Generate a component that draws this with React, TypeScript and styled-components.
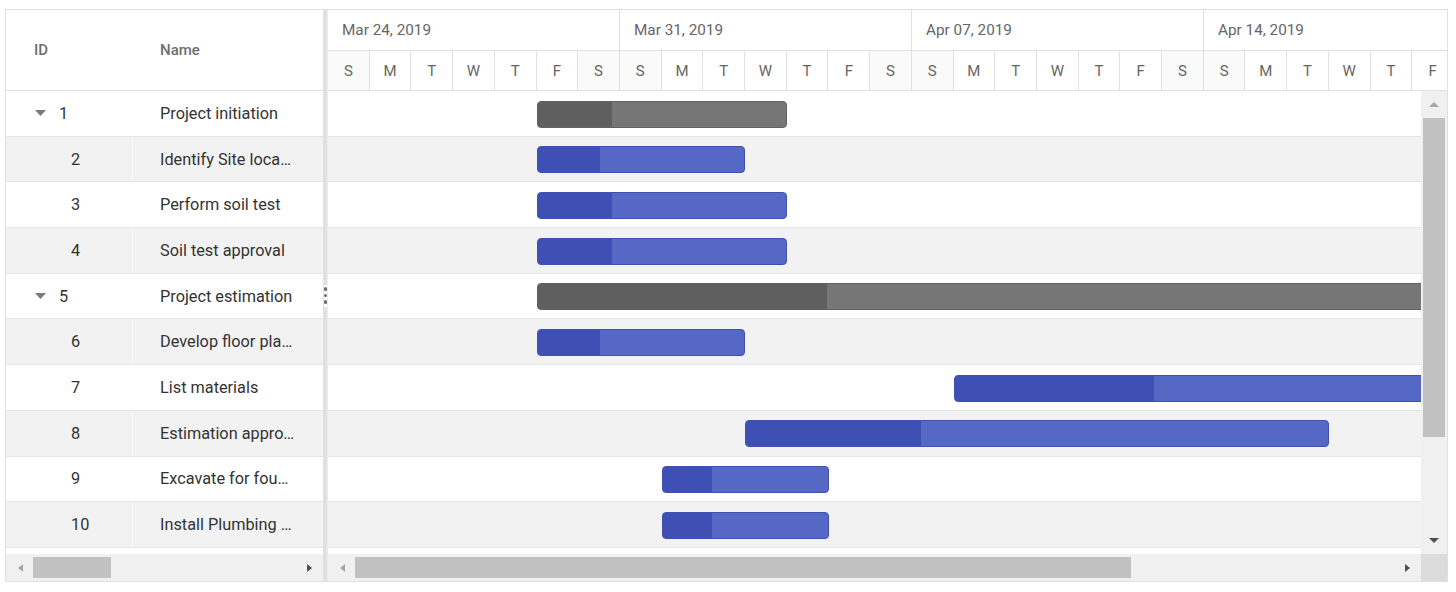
import React from 'react'
import styled, { createGlobalStyle } from 'styled-components'

const DAY = 292 / 7
const ROW_H = 45.7

const GlobalStyle = createGlobalStyle`
  body {
    margin: 0;
    background: #fff;
    font-family: Roboto, 'Noto Sans', Arial, sans-serif;
  }
`

interface Task {
  id: number
  name: string
  parent?: boolean
  start: number
  days: number
  progress: number
}

const tasks: Task[] = [
  { id: 1, name: 'Project initiation', parent: true, start: 5, days: 6, progress: 30 },
  { id: 2, name: 'Identify Site location', start: 5, days: 5, progress: 30 },
  { id: 3, name: 'Perform soil test', start: 5, days: 6, progress: 30 },
  { id: 4, name: 'Soil test approval', start: 5, days: 6, progress: 30 },
  { id: 5, name: 'Project estimation', parent: true, start: 5, days: 24, progress: 29 },
  { id: 6, name: 'Develop floor plan for estimation', start: 5, days: 5, progress: 30 },
  { id: 7, name: 'List materials', start: 15, days: 16, progress: 30 },
  { id: 8, name: 'Estimation approval', start: 10, days: 14, progress: 30 },
  { id: 9, name: 'Excavate for foundations', start: 8, days: 4, progress: 30 },
  { id: 10, name: 'Install Plumbing grounds', start: 8, days: 4, progress: 30 },
]

const weeks = ['Mar 24, 2019', 'Mar 31, 2019', 'Apr 07, 2019', 'Apr 14, 2019', 'Apr 21, 2019']
const dayLetters = ['S', 'M', 'T', 'W', 'T', 'F', 'S']

const Gantt = styled.div`
  display: flex;
  width: 1441px;
  margin: 9px 0 0 5px;
  border: 1px solid #e0e0e0;
  background: #fff;
  overflow: hidden;
`

/* ---------- left tree grid ---------- */

const GridPane = styled.div`
  width: 317px;
  flex-shrink: 0;
  display: flex;
  flex-direction: column;
`

const GridHeader = styled.div`
  display: flex;
  height: 81px;
  box-sizing: border-box;
  border-bottom: 1px solid #e0e0e0;
`

const HeaderCell = styled.div<{ $w: number; $pad: number }>`
  width: ${(p) => p.$w}px;
  padding-left: ${(p) => p.$pad}px;
  box-sizing: border-box;
  display: flex;
  align-items: center;
  font-size: 15px;
  font-weight: 500;
  color: #6e6e6e;
`

const Body = styled.div`
  height: 463px;
  overflow: hidden;
`

const Row = styled.div<{ $alt: boolean }>`
  display: flex;
  height: ${ROW_H}px;
  box-sizing: border-box;
  border-bottom: 1px solid #e6e6e6;
  background: ${(p) => (p.$alt ? '#f2f2f2' : '#fff')};
`

const IdCell = styled.div<{ $parent: boolean }>`
  width: 127px;
  flex-shrink: 0;
  box-sizing: border-box;
  display: flex;
  align-items: center;
  padding-left: ${(p) => (p.$parent ? 29 : 65)}px;
  border-right: 1px solid rgba(255, 255, 255, 0.55);
  font-size: 16.3px;
  color: #333;
`

const ExpandIcon = styled.svg`
  width: 11px;
  height: 6px;
  margin-right: 13px;
  fill: #7a7a7a;
`

const NameCell = styled.div`
  flex: 1;
  min-width: 0;
  padding: 0 28px 0 27px;
  display: flex;
  align-items: center;
  font-size: 16.3px;
  color: #333;

  span {
    overflow: hidden;
    white-space: nowrap;
    text-overflow: ellipsis;
  }
`

/* ---------- splitter ---------- */

const Splitter = styled.div`
  width: 5px;
  flex-shrink: 0;
  background: #e0e0e0;
  border-right: 1px solid #ededed;
  box-sizing: border-box;
  display: flex;
  flex-direction: column;
  justify-content: center;
`

const Handle = styled.div`
  height: 22px;
  background: #fff;
  display: flex;
  flex-direction: column;
  align-items: center;
  justify-content: center;
  gap: 3px;
  margin-left: 1px;
`

const Dot = styled.span`
  width: 3.5px;
  height: 3.5px;
  border-radius: 50%;
  background: #6a6a6a;
`

/* ---------- chart side ---------- */

const ChartPane = styled.div`
  flex: 1;
  min-width: 0;
  display: flex;
  flex-direction: column;
  overflow: hidden;
`

const Tier = styled.div<{ $h: number }>`
  display: flex;
  height: ${(p) => p.$h}px;
  box-sizing: border-box;
  border-bottom: 1px solid #e0e0e0;
`

const WeekCell = styled.div`
  width: ${DAY * 7}px;
  flex-shrink: 0;
  box-sizing: border-box;
  border-right: 1px solid #e0e0e0;
  padding-left: 14px;
  display: flex;
  align-items: center;
  font-size: 15.3px;
  color: #666;
`

const DayCell = styled.div<{ $weekend: boolean }>`
  width: ${DAY}px;
  flex-shrink: 0;
  box-sizing: border-box;
  border-right: 1px solid #e0e0e0;
  display: flex;
  align-items: center;
  justify-content: center;
  font-size: 15px;
  color: #666;
  background: ${(p) => (p.$weekend ? '#fafafa' : '#fff')};
`

const ChartMain = styled.div`
  display: flex;
  height: 463px;
`

const ChartBody = styled.div`
  flex: 1;
  overflow: hidden;
`

const ChartRow = styled(Row)`
  position: relative;
  align-items: center;
`

const TaskBar = styled.div<{ $parent: boolean }>`
  position: absolute;
  top: 9.5px;
  height: 27px;
  box-sizing: border-box;
  border-radius: 4px;
  overflow: hidden;
  border: 1px solid ${(p) => (p.$parent ? '#616161' : '#3f51b5')};
  background: ${(p) => (p.$parent ? '#767676' : '#5668c6')};
`

const Progress = styled.div<{ $parent: boolean }>`
  height: 100%;
  background: ${(p) => (p.$parent ? '#5f5f5f' : '#3e50b4')};
`

/* ---------- scrollbars ---------- */

const HScroll = styled.div`
  height: 27px;
  flex: 1;
  display: flex;
  align-items: center;
  background: #f0f0f0;
`

const ArrowBox = styled.div<{ $w: number }>`
  width: ${(p) => p.$w}px;
  height: 100%;
  flex-shrink: 0;
  display: flex;
  align-items: center;
  justify-content: center;
`

const HTrack = styled.div`
  flex: 1;
  height: 21px;
  display: flex;
`

const HThumb = styled.div<{ $w: number }>`
  width: ${(p) => p.$w}px;
  height: 100%;
  background: #c1c1c1;
`

const VScroll = styled.div`
  width: 26px;
  flex-shrink: 0;
  display: flex;
  flex-direction: column;
  background: #f0f0f0;
`

const VTrack = styled.div`
  flex: 1;
  display: flex;
  flex-direction: column;
  padding: 0 2px;
`

const VThumb = styled.div<{ $h: number }>`
  height: ${(p) => p.$h}px;
  background: #c1c1c1;
`

const Footer = styled.div`
  display: flex;
`

const Corner = styled.div`
  width: 26px;
  height: 27px;
  background: #dcdcdc;
`

type Dir = 'left' | 'right' | 'up' | 'down'

const arrowPoints: Record<Dir, string> = {
  left: '7,0 7,8 2,4',
  right: '1,0 1,8 6,4',
  up: '0,6 10,6 5,1',
  down: '0,1 10,1 5,6',
}

const Arrow: React.FC<{ dir: Dir; dark?: boolean }> = ({ dir, dark }) => {
  const vertical = dir === 'up' || dir === 'down'
  return (
    <svg width={vertical ? 10 : 8} height={vertical ? 7 : 8} viewBox={vertical ? '0 0 10 7' : '0 0 8 8'}>
      <polygon points={arrowPoints[dir]} fill={dark ? '#4f4f4f' : '#a6a6a6'} />
    </svg>
  )
}

const ScrollBarH: React.FC<{ thumb: number }> = ({ thumb }) => (
  <HScroll>
    <ArrowBox $w={27}>
      <Arrow dir="left" />
    </ArrowBox>
    <HTrack>
      <HThumb $w={thumb} />
    </HTrack>
    <ArrowBox $w={27}>
      <Arrow dir="right" dark />
    </ArrowBox>
  </HScroll>
)

const App: React.FC = () => {
  return (
    <>
      <GlobalStyle />
      <Gantt>
        <GridPane>
          <GridHeader>
            <HeaderCell $w={127} $pad={28}>ID</HeaderCell>
            <HeaderCell $w={190} $pad={27}>Name</HeaderCell>
          </GridHeader>
          <Body>
            {tasks.map((t, i) => (
              <Row key={t.id} $alt={i % 2 === 1}>
                <IdCell $parent={!!t.parent}>
                  {t.parent && (
                    <ExpandIcon viewBox="0 0 11 6">
                      <polygon points="0,0 11,0 5.5,6" />
                    </ExpandIcon>
                  )}
                  {t.id}
                </IdCell>
                <NameCell>
                  <span>{t.name}</span>
                </NameCell>
              </Row>
            ))}
          </Body>
          <Footer>
            <ScrollBarH thumb={78} />
          </Footer>
        </GridPane>

        <Splitter>
          <Handle>
            <Dot />
            <Dot />
            <Dot />
          </Handle>
        </Splitter>

        <ChartPane>
          <Tier $h={41}>
            {weeks.map((w) => (
              <WeekCell key={w}>{w}</WeekCell>
            ))}
          </Tier>
          <Tier $h={40}>
            {weeks.flatMap((w) =>
              dayLetters.map((d, i) => (
                <DayCell key={w + i} $weekend={i === 0 || i === 6}>
                  {d}
                </DayCell>
              )),
            )}
          </Tier>
          <ChartMain>
            <ChartBody>
              {tasks.map((t, i) => (
                <ChartRow key={t.id} $alt={i % 2 === 1}>
                  <TaskBar $parent={!!t.parent} style={{ left: t.start * DAY, width: t.days * DAY }}>
                    <Progress $parent={!!t.parent} style={{ width: `${t.progress}%` }} />
                  </TaskBar>
                </ChartRow>
              ))}
            </ChartBody>
            <VScroll>
              <ArrowBox $w={26} style={{ height: 27 }}>
                <Arrow dir="up" />
              </ArrowBox>
              <VTrack>
                <VThumb $h={319} />
              </VTrack>
              <ArrowBox $w={26} style={{ height: 27 }}>
                <Arrow dir="down" dark />
              </ArrowBox>
            </VScroll>
          </ChartMain>
          <Footer>
            <ScrollBarH thumb={776} />
            <Corner />
          </Footer>
        </ChartPane>
      </Gantt>
    </>
  )
}

export default App
